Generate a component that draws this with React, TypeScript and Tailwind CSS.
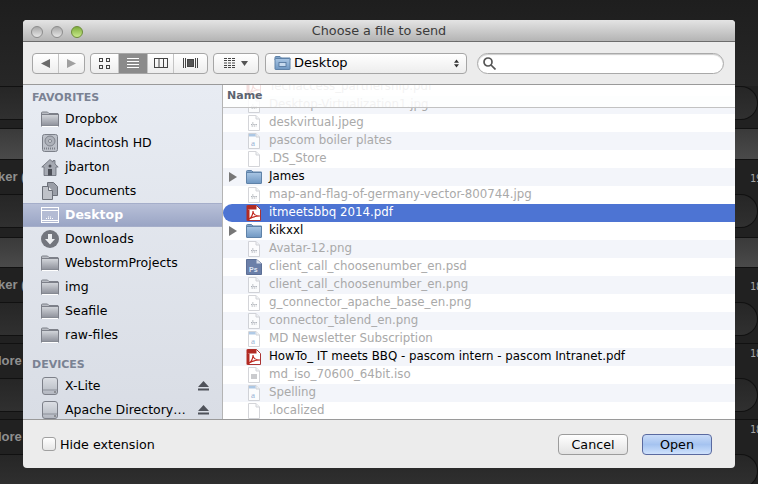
import React from 'react';

type FileKind = 'image' | 'text' | 'blank' | 'iso' | 'pdf' | 'psd' | 'folder';

const files: { name: string; kind: FileKind; active?: boolean; selected?: boolean }[] = [
  { name: 'Techaccess_partnership.pdf', kind: 'pdf' },
  { name: 'Desktop-Virtualization1.jpg', kind: 'image' },
  { name: 'deskvirtual.jpeg', kind: 'image' },
  { name: 'pascom boiler plates', kind: 'text' },
  { name: '.DS_Store', kind: 'blank' },
  { name: 'James', kind: 'folder', active: true },
  { name: 'map-and-flag-of-germany-vector-800744.jpg', kind: 'image' },
  { name: 'itmeetsbbq 2014.pdf', kind: 'pdf', active: true, selected: true },
  { name: 'kikxxl', kind: 'folder', active: true },
  { name: 'Avatar-12.png', kind: 'image' },
  { name: 'client_call_choosenumber_en.psd', kind: 'psd' },
  { name: 'client_call_choosenumber_en.png', kind: 'image' },
  { name: 'g_connector_apache_base_en.png', kind: 'image' },
  { name: 'connector_talend_en.png', kind: 'image' },
  { name: 'MD Newsletter Subscription', kind: 'text' },
  { name: 'HowTo_ IT meets BBQ - pascom intern - pascom Intranet.pdf', kind: 'pdf', active: true },
  { name: 'md_iso_70600_64bit.iso', kind: 'iso' },
  { name: 'Spelling', kind: 'text' },
  { name: '.localized', kind: 'blank' },
];

const favorites = ['Dropbox', 'Macintosh HD', 'jbarton', 'Documents', 'Desktop', 'Downloads', 'WebstormProjects', 'img', 'Seafile', 'raw-files'];

function GreyFolder() {
  return (
    <svg width="18" height="16" viewBox="0 0 18 16">
      <defs>
        <linearGradient id="gf" x1="0" y1="0" x2="0" y2="1">
          <stop offset="0" stopColor="#d4d7dc" />
          <stop offset="1" stopColor="#8b8e98" />
        </linearGradient>
      </defs>
      <path d="M.5 3.500V2a1 1 0 0 1 1-1h5l1.500 1.500h9v12h-16.500z" fill="#b9bcc3" stroke="#7d8089" />
      <rect x=".5" y="3.500" width="17" height="11.500" fill="url(#gf)" stroke="#7d8089" />
      <path d="M1 15.500h16" stroke="#fff" />
    </svg>
  );
}

function BlueFolder({ small }: { small?: boolean }) {
  return (
    <svg width={small ? 17 : 16} height="14" viewBox="0 0 16 14">
      <defs>
        <linearGradient id="bf" x1="0" y1="0" x2="0" y2="1">
          <stop offset="0" stopColor="#a9c6e4" />
          <stop offset="1" stopColor="#6f97c2" />
        </linearGradient>
      </defs>
      <path d="M.5 3V1.500a1 1 0 0 1 1-1h4l1.500 1.500h8.500v2h-15z" fill="#7fa2c8" stroke="#5f82a8" />
      <rect x=".5" y="2.500" width="15" height="11" rx=".5" fill="url(#bf)" stroke="#5f82a8" />
      {small && <rect x="4.500" y="6.500" width="7" height="4" fill="#c7daee" stroke="#4f7299" strokeWidth=".8" />}
    </svg>
  );
}

function SideIcon({ name }: { name: string }) {
  if (name === 'Macintosh HD') {
    return (
      <svg width="16" height="18" viewBox="0 0 16 18">
        <rect x=".5" y=".5" width="15" height="17" rx="2" fill="#bcc0c8" stroke="#7c8089" />
        <circle cx="8" cy="7" r="5" fill="#aeb2ba" stroke="#7f838c" />
        <circle cx="8" cy="7" r="1.500" fill="#e0e2e6" stroke="#7f838c" />
        <path d="M2 14.500h12" stroke="#7c8089" strokeWidth="2" strokeDasharray="1 1" />
      </svg>
    );
  }
  if (name === 'jbarton') {
    return (
      <svg width="18" height="17" viewBox="0 0 18 17">
        <path d="M9 .5 .8 8h2.200v8.500h12V8h2.200l-3.200-3V1.500h-2v1.600z" fill="#a5a9b2" stroke="#666a73" strokeWidth=".8" />
        <rect x="7" y="10" width="4" height="6.500" fill="#4d5058" />
        <circle cx="9" cy="7" r="1.500" fill="#4d5058" />
      </svg>
    );
  }
  if (name === 'Documents') {
    return (
      <svg width="16" height="18" viewBox="0 0 16 18">
        <path d="M5.500.5h6l4 4v9h-10z" fill="#9a9ea7" stroke="#6c7079" />
        <path d="M.5 4.500h6l4 4v9h-10z" fill="#bfc2c9" stroke="#6c7079" />
        <path d="M6.500 4.500v4h4" fill="#eef0f3" stroke="#6c7079" />
      </svg>
    );
  }
  if (name === 'Desktop') {
    return (
      <svg width="18" height="16" viewBox="0 0 18 16">
        <rect x=".5" y=".5" width="17" height="15" fill="#b4bcd4" stroke="#fff" />
        <path d="M1 3.500h16" stroke="#fff" />
        <path d="M5 11.500h8M7 10h4" stroke="#fff" strokeDasharray="1 1" />
        <path d="M1 13.500h16" stroke="#fff" />
      </svg>
    );
  }
  if (name === 'Downloads') {
    return (
      <svg width="18" height="18" viewBox="0 0 18 18">
        <circle cx="9" cy="9" r="9" fill="#73767e" />
        <path d="M7 4h4v5h3l-5 5.500L4 9h3z" fill="#eceef1" />
      </svg>
    );
  }
  return <GreyFolder />;
}

function Drive() {
  return (
    <svg width="16" height="18" viewBox="0 0 16 18">
      <defs>
        <linearGradient id="dr" x1="0" y1="0" x2="0" y2="1">
          <stop offset="0" stopColor="#dde0e5" />
          <stop offset="1" stopColor="#b3b7c0" />
        </linearGradient>
      </defs>
      <rect x=".5" y=".5" width="15" height="17" rx="2.500" fill="url(#dr)" stroke="#7d8089" />
      <path d="M1 13h14" stroke="#8c9099" />
      <circle cx="13" cy="15" r=".8" fill="#555" />
    </svg>
  );
}

function Eject() {
  return (
    <svg width="11" height="10" viewBox="0 0 11 10">
      <path d="M5.500 0 11 6H0z" fill="#4f525a" />
      <rect y="7.500" width="11" height="2" fill="#4f525a" />
    </svg>
  );
}

function FileIcon({ kind }: { kind: FileKind }) {
  if (kind === 'folder') return <BlueFolder />;
  if (kind === 'pdf') {
    return (
      <svg width="16" height="16" viewBox="0 0 16 16">
        <path d="M1.500.5h9l4 4v11h-13z" fill="#fff" stroke="#a33" />
        <path d="M.5.5h10v4H.5z" fill="#b22a22" />
        <path d="M.5 4.500h3v11h-3z" fill="#b22a22" />
        <path d="M3 14c3-2 4-5 4-8 0 3 2 5 7 5-3 0-7 .5-11 3z" fill="none" stroke="#c0281f" strokeWidth="1.100" />
      </svg>
    );
  }
  if (kind === 'psd') {
    return (
      <svg width="16" height="16" viewBox="0 0 16 16">
        <path d="M.5.5h10l5 4v11H.5z" fill="#6b7fa8" stroke="#5c6f96" />
        <path d="M10.500.5v4h5z" fill="#d5dbe8" />
        <text x="3" y="13" fontSize="7" fontWeight="700" fontFamily="Liberation Sans" fill="#dfe6f4">Ps</text>
      </svg>
    );
  }
  return (
    <svg width="12" height="16" viewBox="0 0 12 16" className="opacity-70">
      <path d="M.5.5h7.500l3.500 3.500v11.500H.5z" fill="#fff" stroke="#c2c4c9" />
      <path d="M8 .5V4h3.500" fill="#eceef1" stroke="#c2c4c9" />
      {kind === 'image' && <path d="M3 9.500h6M3.500 11h5M4 8h2" stroke="#8e939c" strokeWidth="1.200" strokeDasharray="1.500 .7" />}
      {kind === 'iso' && <rect x="3" y="7" width="6" height="5" fill="#b4b6ba" />}
      {kind === 'text' && (
        <>
          <rect x="1" y="1" width="6.500" height="2.500" fill="#8fb4dc" />
          <text x="3" y="12.500" fontSize="9" fontFamily="Liberation Serif" fill="#6f96c4">a</text>
        </>
      )}
    </svg>
  );
}

function FileRow({ name, kind, active, selected, tinted }: { name: string; kind: FileKind; active?: boolean; selected?: boolean; tinted: boolean }) {
  const rowColor = selected ? 'bg-[#4d74d3] rounded-l-full text-white' : tinted ? 'bg-[#f3f5fa]' : 'bg-white';
  const textColor = selected ? 'text-white' : active ? 'text-black' : 'text-[#a9a9a9]';
  return (
    <div className={`flex h-[18px] shrink-0 items-center ${rowColor}`}>
      <div className="w-[22px] pl-[6px]">
        {kind === 'folder' && (
          <svg width="8" height="10" viewBox="0 0 8 10">
            <path d="M0 0l8 5-8 5z" fill="#777" />
          </svg>
        )}
      </div>
      <div className="mr-[6px] flex w-[18px] justify-center">
        <FileIcon kind={kind} />
      </div>
      <span className={`whitespace-nowrap ${textColor}`}>{name}</span>
    </div>
  );
}

function SidebarRow({ name, selected, device }: { name: string; selected?: boolean; device?: boolean }) {
  return (
    <div
      className={`flex h-6 shrink-0 items-center pl-[18px] ${
        selected ? 'border-y border-y-[#a5aeca] bg-linear-to-b from-[#b8c0d8] to-[#9aa5c5] font-bold text-white' : 'text-black'
      }`}
    >
      <div className="flex w-[18px] justify-center">{device ? <Drive /> : <SideIcon name={name} />}</div>
      <span className="ml-[6px] w-[124px] whitespace-nowrap">{name}</span>
      {device && (
        <div className="ml-[9px]">
          <Eject />
        </div>
      )}
    </div>
  );
}

function SegmentButton({ children, selected, last }: { children: React.ReactNode; selected?: boolean; last?: boolean }) {
  return (
    <div
      className={`flex h-full items-center justify-center ${last ? '' : 'border-r border-r-[#c4c4c4]'} ${
        selected ? 'bg-[#8b8b8b]' : ''
      }`}
    >
      {children}
    </div>
  );
}

function BackgroundRow({ left, right, rightClass }: { left: string; right: string; rightClass: string }) {
  return (
    <div className="flex h-[34px] shrink-0 items-center justify-between text-[#8f8f8f]">
      <span className="-ml-[2px] font-['Liberation_Sans'] text-[13px] font-bold">{left}</span>
      <span className={`-mr-[4px] font-['DejaVu_Sans_Mono'] text-[10px] whitespace-nowrap text-[#a4a4a4] ${rightClass}`}>{right}</span>
    </div>
  );
}

function Pill() {
  return <div className="h-[34px] shrink-0 rounded-r-[26px] border-y border-r border-[#111] bg-linear-to-b from-[#262626] to-[#303030]" />;
}

function Band({ height }: { height: string }) {
  return <div className={`${height} shrink-0 border-y border-[#111] bg-linear-to-b from-[#3a3a3a] to-[#4a4a4a]`} />;
}

export default function App() {
  return (
    <div className="relative h-[484px] w-[758px] overflow-hidden bg-[#212121] font-['DejaVu_Sans',sans-serif] text-[11.8px]">
      {/* page behind the sheet */}
      <div className="flex flex-col">
        <div className="h-[86px] shrink-0 bg-linear-to-b from-[#1e1e1e] to-[#272727]" />
        <Pill />
        <div className="h-2 shrink-0" />
        <Band height="h-[32px]" />
        <BackgroundRow left="ker (" right="19" rightClass="mt-[3px]" />
        <Pill />
        <div className="h-[9px] shrink-0" />
        <Band height="h-[31px]" />
        <BackgroundRow left="ker (" right="18" rightClass="mt-[3px]" />
        <Pill />
        <div className="h-2 shrink-0 border-b border-[#111]" />
        <BackgroundRow left="lore" right="18" rightClass="mb-4" />
        <Pill />
        <div className="h-2 shrink-0 border-b border-[#111]" />
        <BackgroundRow left="lore" right="18" rightClass="mb-4" />
        <Pill />
      </div>

      {/* sheet */}
      <div className="absolute top-[20px] left-[23px] flex h-[448px] w-[712px] flex-col overflow-hidden rounded-[4px] bg-[#ececec]">
        <div className="relative flex h-[22px] shrink-0 items-center justify-center border-b border-b-[#6c6c6c] bg-linear-to-b from-[#e4e4e4] to-[#b4b4b4] pt-px text-[12.8px] text-[#3b3b3b]">
          <div className="absolute top-[6px] left-[8px] flex gap-2">
            <span className="h-3 w-3 rounded-full border border-[#8c8c8c] bg-linear-to-b from-[#a8a8a8] to-[#e6e6e6]" />
            <span className="h-3 w-3 rounded-full border border-[#8c8c8c] bg-linear-to-b from-[#a8a8a8] to-[#e6e6e6]" />
            <span className="h-3 w-3 rounded-full border border-[#6d8c3a] bg-linear-to-b from-[#7fae3c] to-[#c9ea8a]" />
          </div>
          Choose a file to send
        </div>

        <div className="flex h-[43px] shrink-0 items-center border-b border-b-[#9a9a9a] pl-[9px]">
          <div className="grid h-[21px] w-[53px] grid-cols-2 overflow-hidden rounded-[4px] border border-[#a6a6a6] bg-linear-to-b from-white to-[#ededed]">
            <SegmentButton>
              <svg width="9" height="9" viewBox="0 0 9 9"><path d="M0 4.500 9 0v9z" fill="#6a6a6a" /></svg>
            </SegmentButton>
            <SegmentButton last>
              <svg width="9" height="9" viewBox="0 0 9 9"><path d="M9 4.500 0 0v9z" fill="#a0a0a0" /></svg>
            </SegmentButton>
          </div>
          <div className="ml-[5px] grid h-[21px] w-[118px] grid-cols-[28px_29px_26px_1fr] overflow-hidden rounded-[4px] border border-[#a6a6a6] bg-linear-to-b from-white to-[#ededed]">
            <SegmentButton>
              <svg width="11" height="11" viewBox="0 0 11 11" fill="none" stroke="#444"><rect x=".5" y=".5" width="3" height="3" /><rect x="7.500" y=".5" width="3" height="3" /><rect x=".5" y="7.500" width="3" height="3" /><rect x="7.500" y="7.500" width="3" height="3" /></svg>
            </SegmentButton>
            <SegmentButton selected>
              <svg width="12" height="11" viewBox="0 0 12 11" stroke="#fff"><path d="M0 .5h12M0 3.500h12M0 6.500h12M0 9.500h12" /></svg>
            </SegmentButton>
            <SegmentButton>
              <svg width="14" height="10" viewBox="0 0 14 10" fill="none" stroke="#444"><rect x=".5" y=".5" width="13" height="9" /><path d="M5 0v10M9.500 0v10" /></svg>
            </SegmentButton>
            <SegmentButton last>
              <svg width="15" height="10" viewBox="0 0 15 10" fill="none" stroke="#444"><path d="M.5 0v10M2.500 0v10M12.500 0v10M14.500 0v10" /><rect x="4.500" y="1.500" width="6" height="7" fill="#555" /></svg>
            </SegmentButton>
          </div>
          <div className="ml-[5px] flex h-[21px] w-[46px] items-center justify-center gap-[6px] rounded-[4px] border border-[#a6a6a6] bg-linear-to-b from-white to-[#ededed]">
            <svg width="11" height="10" viewBox="0 0 11 10" stroke="#444"><path d="M0 .5h11M0 2.500h11M0 5h11M0 7.500h11M0 9.500h11" strokeDasharray="3 1" /></svg>
            <svg width="7" height="5" viewBox="0 0 7 5"><path d="M0 0h7L3.500 5z" fill="#555" /></svg>
          </div>
          <div className="ml-[6px] flex h-[21px] w-[202px] items-center rounded-[4px] border border-[#a6a6a6] bg-linear-to-b from-white to-[#ededed] pr-[7px] pl-[8px] text-[13px] text-black">
            <BlueFolder small />
            <span className="ml-[3px] flex-1">Desktop</span>
            <svg width="5" height="11" viewBox="0 0 7 11"><path d="M3.500 0 7 4.500H0zM3.500 11 0 6.500h7z" fill="#333" /></svg>
          </div>
          <div className="ml-[10px] flex h-[21px] w-[247px] items-center rounded-full border border-[#a9a9a9] bg-white pl-[5px] shadow-[inset_0_1px_1px_#ccc]">
            <svg width="13" height="13" viewBox="0 0 13 13" fill="none" stroke="#555" strokeWidth="1.700"><circle cx="5" cy="5" r="4" /><path d="m8 8 4.500 4.500" /></svg>
          </div>
        </div>

        <div className="flex min-h-0 flex-1">
          <div className="flex w-[200px] shrink-0 flex-col overflow-hidden border-r border-r-[#b4b4b4] bg-linear-to-b from-[#e8ecf3] to-[#d9dde5] text-[12.5px]">
            <div className="flex h-[22px] shrink-0 items-center pt-[4px] pl-[9px] text-[11px] font-bold text-[#7a8293]">FAVORITES</div>
            {favorites.map((name) => (
              <SidebarRow key={name} name={name} selected={name === 'Desktop'} />
            ))}
            <div className="h-[27px] shrink-0 pt-[10px] pl-[9px] text-[11px] font-bold text-[#7a8293]">DEVICES</div>
            <SidebarRow name="X-Lite" device />
            <SidebarRow name="Apache Directory…" device />
          </div>

          <div className="relative min-w-0 flex-1 overflow-hidden bg-white">
            <div className="absolute inset-x-0 top-0 z-10 flex h-[23px] items-center border-b border-b-[#c2c2c2] bg-white/85 pt-px pl-[4px] text-[11px] font-bold text-[#5d6470]">Name</div>
            <div className="-mt-[7px] flex flex-col">
              {files.map((file, i) => (
                <FileRow key={file.name} {...file} tinted={i % 2 === 1} />
              ))}
            </div>
          </div>
        </div>

        <div className="flex h-[49px] shrink-0 items-center border-t border-t-[#9a9a9a] pr-[23px] pl-[19px] text-[12.7px] text-black">
          <span className="h-[14px] w-[14px] rounded-[3px] border border-[#a0a0a0] bg-linear-to-b from-white to-[#e6e6e6]" />
          <span className="ml-[4px] flex-1 pt-px">Hide extension</span>
          <button className="h-[21px] w-[70px] rounded-[4px] border border-[#9c9c9c] bg-linear-to-b from-white to-[#e2e2e2]">Cancel</button>
          <button className="ml-[14px] h-[21px] w-[70px] rounded-[4px] border border-[#5a6aa0] bg-linear-to-b from-[#c9dbf8] via-[#a5c3f0] to-[#cfe2fc]">Open</button>
        </div>
      </div>
    </div>
  );
}
